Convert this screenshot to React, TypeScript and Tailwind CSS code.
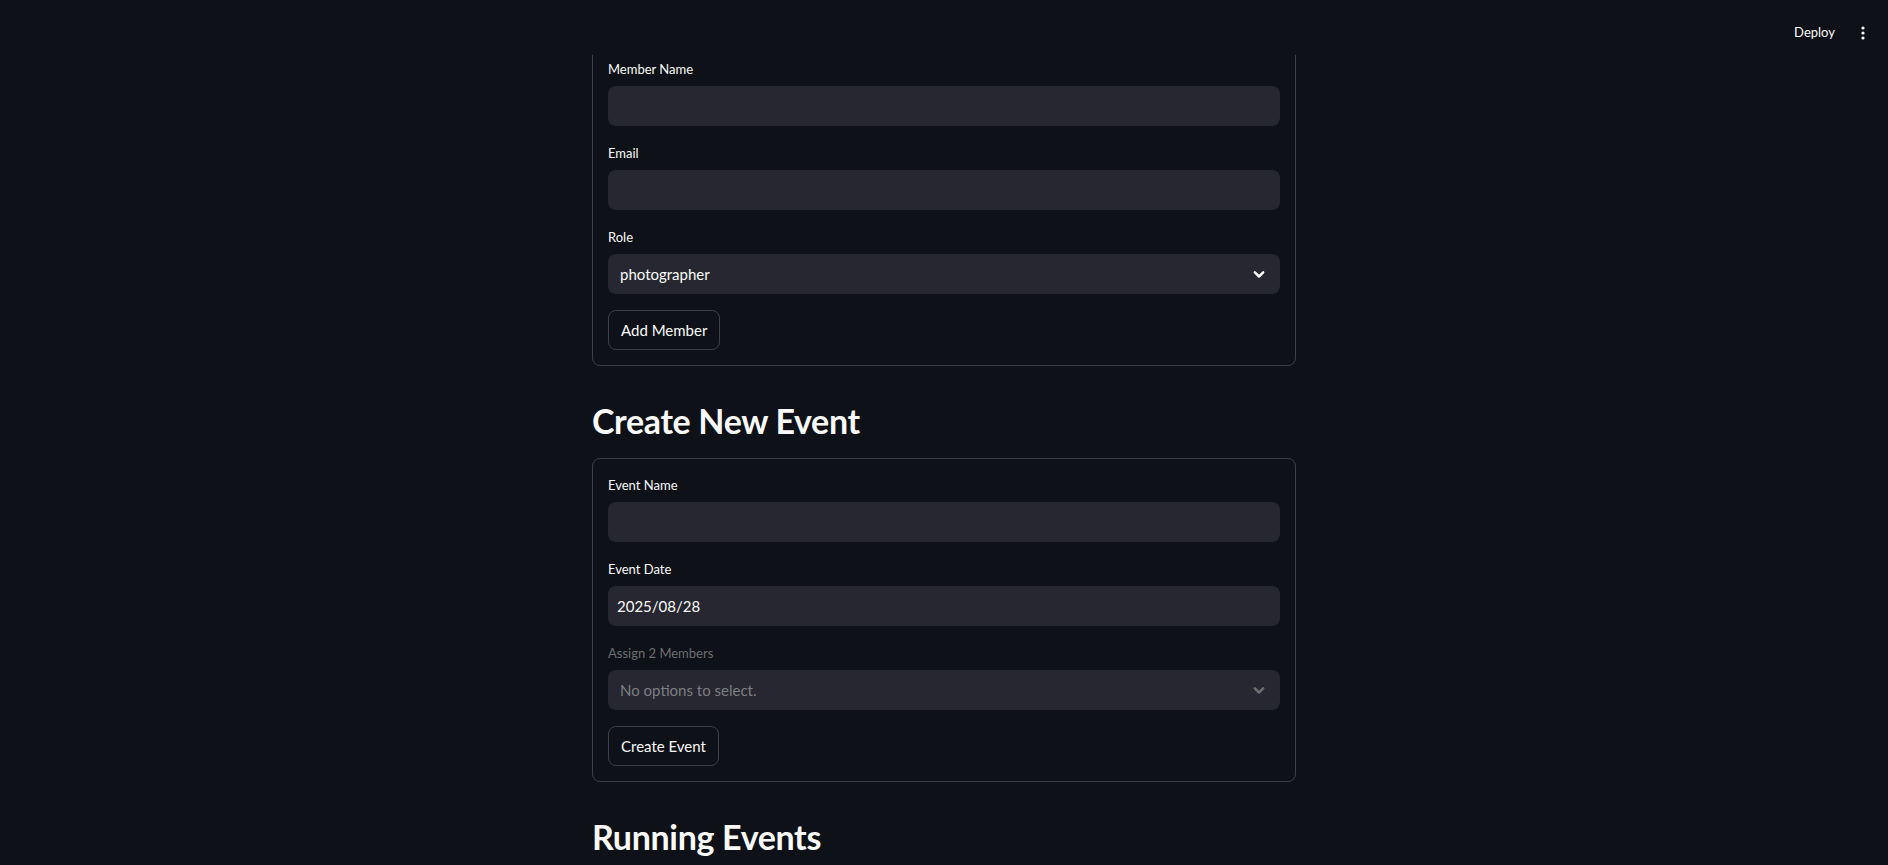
import React from "react";

const font = "font-['Lato','Liberation_Sans',sans-serif]";

function Label({ children, disabled }: { children: React.ReactNode; disabled?: boolean }) {
  return (
    <div className={`h-6 mb-1 flex items-center text-[13px] ${disabled ? "text-[#6c6e72]" : "text-[#fafafa]"}`}>
      {children}
    </div>
  );
}

function TextInput({ value }: { value?: string }) {
  return (
    <div className="h-10 rounded-lg bg-[#262730] flex items-center pl-[9px] text-[15px] text-[#fafafa]">
      {value}
    </div>
  );
}

function Chevron({ color }: { color: string }) {
  return (
    <svg width="20" height="20" viewBox="0 0 24 24" fill="none" stroke={color} strokeWidth="3" strokeLinecap="round" strokeLinejoin="round">
      <path d="M7 10l5 5 5-5" />
    </svg>
  );
}

function Select({ value, disabled }: { value: string; disabled?: boolean }) {
  return (
    <div className="h-10 rounded-lg bg-[#262730] flex items-center justify-between pl-3 pr-[11px]">
      <span className={`text-[15px] ${disabled ? "text-[#7d7e84]" : "text-[#fafafa]"}`}>{value}</span>
      <Chevron color={disabled ? "#6c6e72" : "#fafafa"} />
    </div>
  );
}

function Button({ children }: { children: React.ReactNode }) {
  return (
    <div>
      <button className="h-10 px-3 rounded-lg border border-[#3d4046] bg-[#0e1117] text-[15px] text-[#fafafa]">
        {children}
      </button>
    </div>
  );
}

function Field({ label, children, disabled }: { label: string; children: React.ReactNode; disabled?: boolean }) {
  return (
    <div>
      <Label disabled={disabled}>{label}</Label>
      {children}
    </div>
  );
}

function Heading({ children }: { children: React.ReactNode }) {
  return (
    <h2 className="pt-[18px] text-[34px] leading-[42px] font-bold tracking-[-0.01em] text-[#fafafa]">
      {children}
    </h2>
  );
}

export default function App() {
  return (
    <div className={`h-screen overflow-hidden bg-[#0e1117] ${font}`}>
      <header className="fixed top-0 inset-x-0 h-[55px] bg-[#0e1117] z-10 flex justify-end items-start pt-[17px] pr-[9px]">
        <button className="h-8 px-3 text-[13px] text-[#fafafa]">Deploy</button>
        <button className="h-8 w-8 flex items-center justify-center">
          <svg width="4" height="14" viewBox="0 0 4 14" fill="#fafafa">
            <circle cx="2" cy="2" r="1.6" />
            <circle cx="2" cy="7" r="1.6" />
            <circle cx="2" cy="12" r="1.6" />
          </svg>
        </button>
      </header>

      <main className="w-[704px] mx-auto pt-[42px] flex flex-col gap-4">
        <section className="border border-[#3d4046] rounded-lg p-[15px] flex flex-col gap-4">
          <Field label="Member Name">
            <TextInput />
          </Field>
          <Field label="Email">
            <TextInput />
          </Field>
          <Field label="Role">
            <Select value="photographer" />
          </Field>
          <Button>Add Member</Button>
        </section>

        <Heading>Create New Event</Heading>

        <section className="border border-[#3d4046] rounded-lg p-[15px] flex flex-col gap-4">
          <Field label="Event Name">
            <TextInput />
          </Field>
          <Field label="Event Date">
            <TextInput value="2025/08/28" />
          </Field>
          <Field label="Assign 2 Members" disabled>
            <Select value="No options to select." disabled />
          </Field>
          <Button>Create Event</Button>
        </section>

        <Heading>Running Events</Heading>
      </main>
    </div>
  );
}
